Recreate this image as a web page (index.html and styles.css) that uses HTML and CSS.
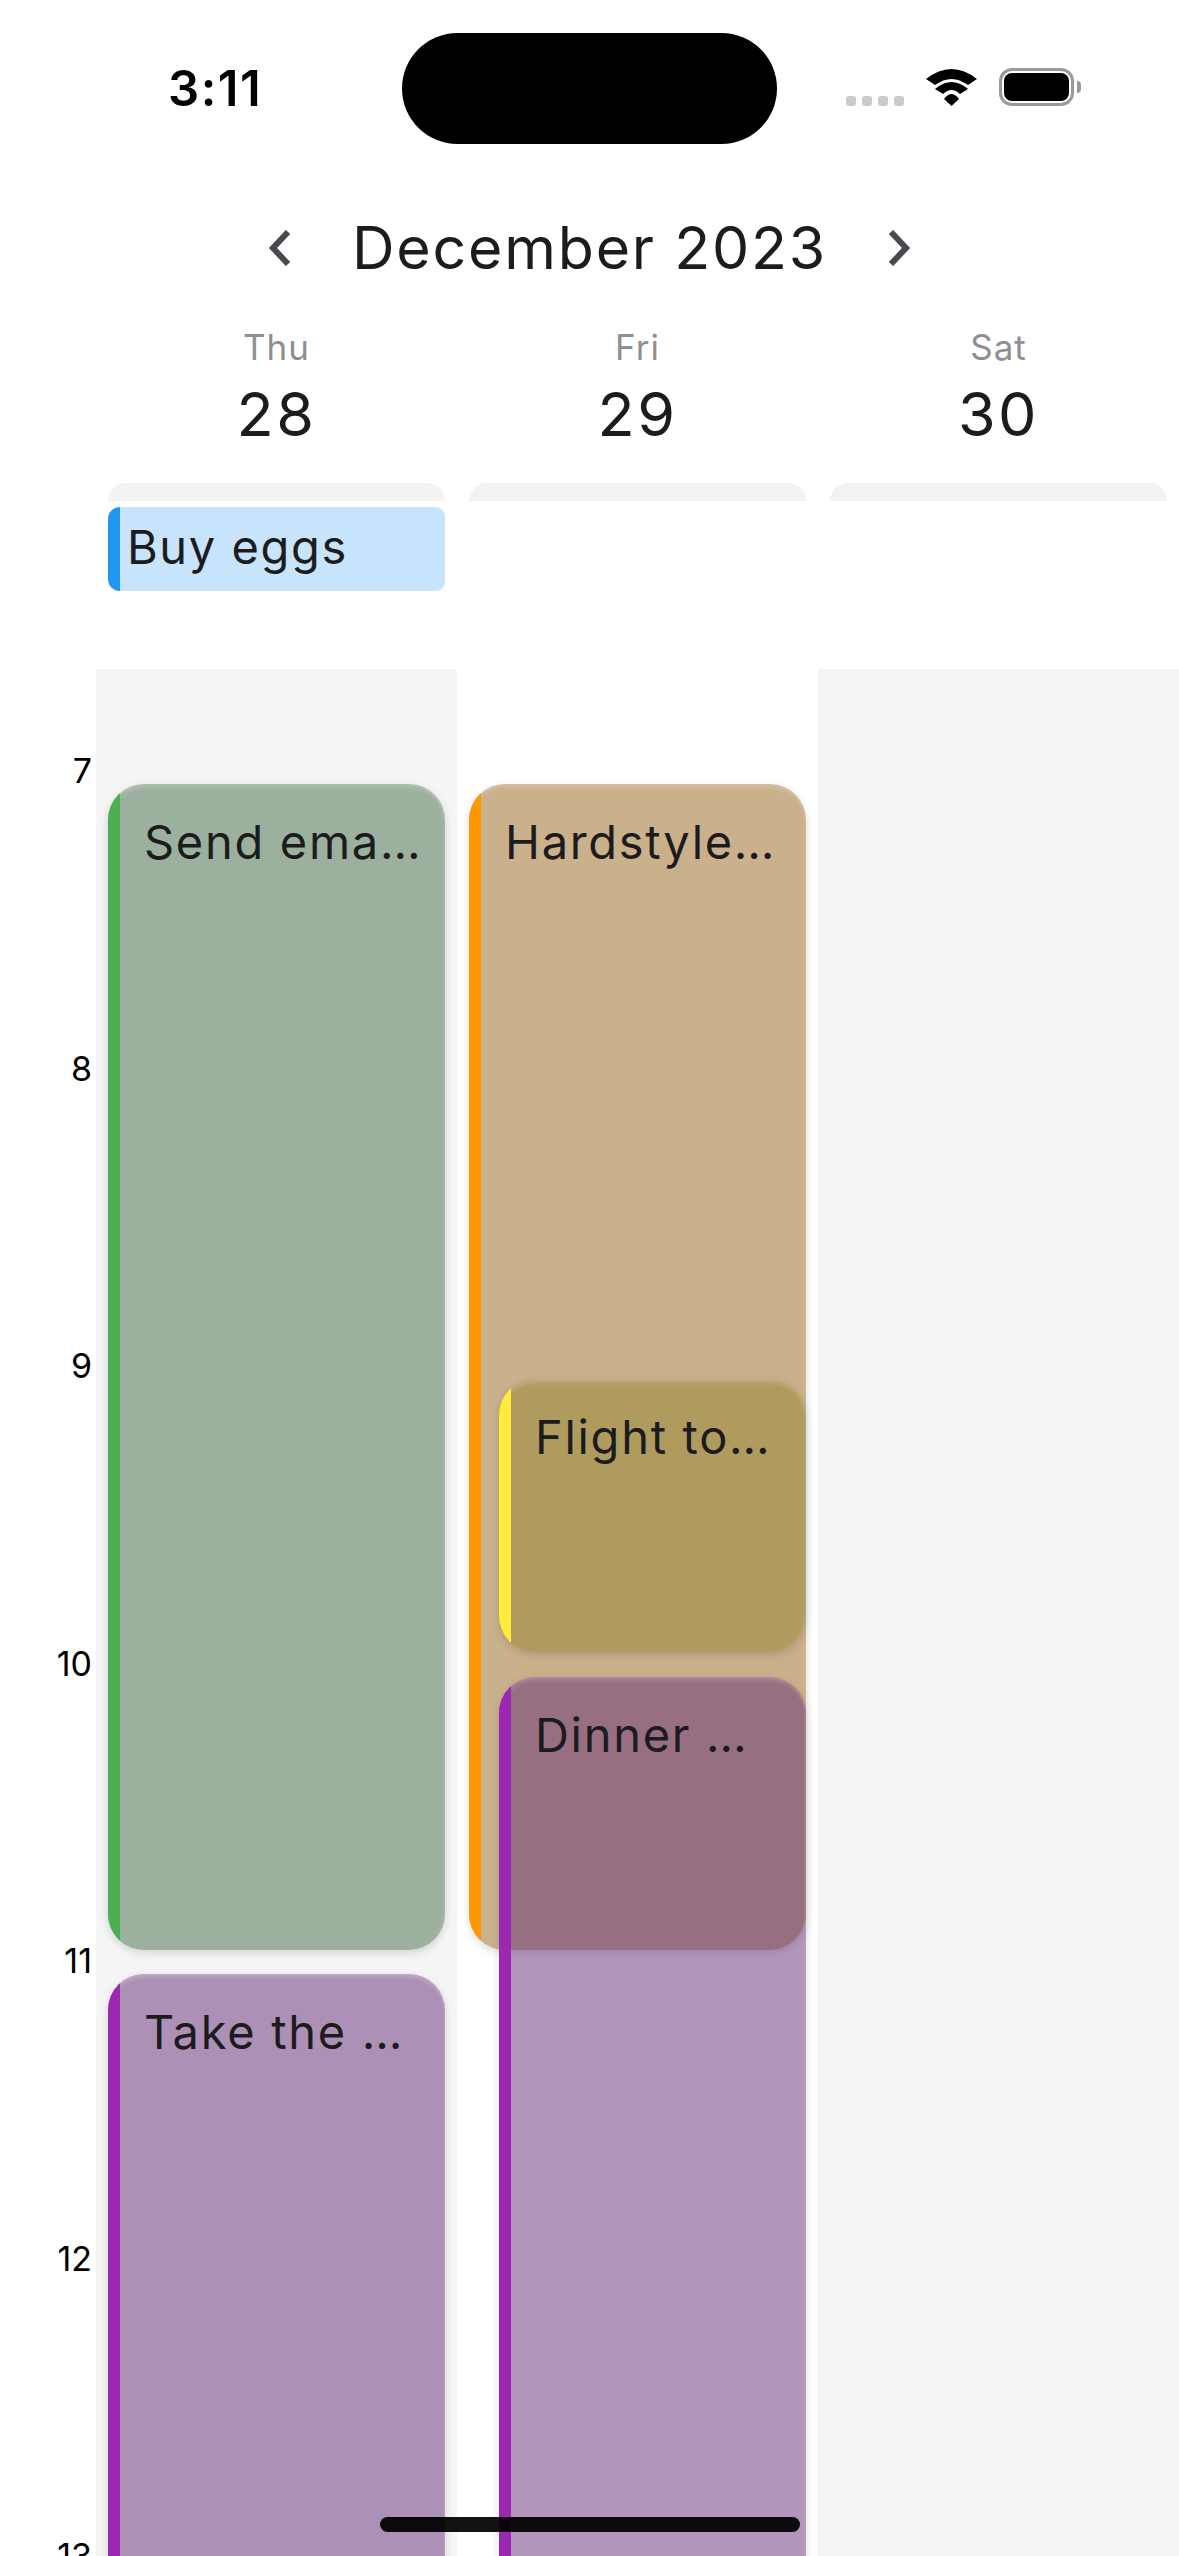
FILE: index.html
```html
<!DOCTYPE html>
<html lang="en">
<head>
  <meta charset="UTF-8" />
  <title>Calendar</title>
  <link rel="stylesheet" href="styles.css">
</head>
<body>
  <div class="statusbar">
    <div class="time">3:11</div>
    <div class="island"></div>
    <div class="signal">
      <span class="dot"></span><span class="dot"></span><span class="dot"></span><span class="dot"></span>
    </div>
    <svg class="wifi" width="51" height="37" viewBox="0 0 51 37">
      <path d="M0 10Q25.500 -10 51 10L42 16Q25.500 4 9 16Z" />
      <path d="M9 20Q25.500 6 42 20L34 25Q25.500 17 17 25Z" />
      <path d="M18 30Q25.500 20 33 30L25.500 37Z" />
    </svg>
    <div class="battery"><div class="battery-fill"></div></div>
    <div class="battery-cap"></div>
  </div>

  <!-- Month switcher -->
  <div class="month">
    <svg class="chevron" width="24" height="36" viewBox="0 0 24 36">
      <polyline points="20,2 5,18 20,34" />
    </svg>
    <div class="month-title">December 2023</div>
    <svg class="chevron" width="24" height="36" viewBox="0 0 24 36">
      <polyline points="4,2 19,18 4,34" />
    </svg>
  </div>

  <!-- Day headers and all-day events -->
  <div class="days">
    <div class="day">
      <div class="day-name">Thu</div>
      <div class="day-num">28</div>
      <div class="allday-track"></div>
      <div class="allday-event"><span class="allday-bar"></span><span class="allday-title">Buy eggs</span></div>
    </div>
    <div class="day">
      <div class="day-name">Fri</div>
      <div class="day-num">29</div>
      <div class="allday-track"></div>
    </div>
    <div class="day">
      <div class="day-name">Sat</div>
      <div class="day-num">30</div>
      <div class="allday-track"></div>
    </div>
  </div>

  <!-- Hour grid -->
  <div class="timeline">
    <div class="hours">
      <div class="hour">7</div>
      <div class="hour">8</div>
      <div class="hour">9</div>
      <div class="hour">10</div>
      <div class="hour">11</div>
      <div class="hour">12</div>
      <div class="hour">13</div>
    </div>

    <div class="col col-grey">
      <div class="event ev-send"><span class="event-bar"></span><div class="event-title">Send ema…</div></div>
      <div class="event ev-take"><span class="event-bar"></span><div class="event-title">Take the …</div></div>
    </div>

    <div class="col">
      <div class="event ev-hardstyle"><span class="event-bar"></span><div class="event-title">Hardstyle…</div></div>
      <div class="event ev-flight"><span class="event-bar"></span><div class="event-title">Flight to…</div></div>
      <div class="event ev-dinner"><span class="event-bar"></span><div class="event-title">Dinner …</div></div>
    </div>

    <div class="col col-grey"></div>
  </div>

  <div class="home-indicator"></div>
</body>
</html>
```

FILE: styles.css
```css
* { box-sizing: border-box; }
html, body { margin: 0; padding: 0; }
body { position: relative; width: 1179px; height: 2556px; overflow: hidden; background: #fff; font-family: Inter, "Liberation Sans", sans-serif; color: #1c1c1e; display: flex; flex-direction: column; }

/* status bar */
.statusbar { display: flex; align-items: center; height: 111px; margin-top: 33px; }
.time { width: 402px; padding-left: 168px; font-size: 49px; font-weight: 600; letter-spacing: 1.5px; color: #000; line-height: 108px; }
.island { width: 375px; height: 111px; border-radius: 56px; background: #000; }
.signal { display: flex; gap: 6px; margin-left: 69px; margin-top: 25px; }
.dot { width: 10px; height: 10px; border-radius: 3px; background: #ccc; }
.wifi { margin-left: 22px; fill: #000; margin-top: -3px; }
.battery { width: 75px; height: 38px; margin-left: 22px; margin-top: -3px; padding: 2px; border: 3px solid #999; border-radius: 13px; }
.battery-fill { width: 100%; height: 100%; border-radius: 8px; background: #000; }
.battery-cap { width: 4px; height: 12px; margin-left: 3px; margin-top: -3px; border-radius: 0 6px 6px 0; background: #999; }

/* month */
.month { display: flex; align-items: center; justify-content: center; gap: 60px; height: 120px; margin-top: 44px; margin-bottom: 2px; }
.month .chevron { fill: none; stroke: #48484e; stroke-width: 6; }
.month-title { font-size: 59px; font-weight: 435; letter-spacing: 1.8px; line-height: 120px; }

/* day headers */
.days { display: grid; grid-template-columns: repeat(3, 361px); margin-left: 96px; height: 359px; padding-top: 15px; }
.day { padding: 0 12px; text-align: center; }
.day-name { font-size: 35px; line-height: 44px; color: #8e8e93; letter-spacing: 1px; }
.day-num { margin-top: 9px; font-size: 61px; font-weight: 435; line-height: 72px; letter-spacing: 2.5px; }
.allday-track { height: 18px; margin-top: 33px; border-radius: 18px 18px 0 0; background: #f2f2f2; }
.allday-event { display: flex; height: 84px; margin-top: 6px; border-radius: 12px 9px 9px 12px; overflow: hidden; background: #c7e4fc; text-align: left; }
.allday-bar { width: 12px; background: #2196f3; }
.allday-title { padding-left: 7px; font-size: 47px; font-weight: 435; letter-spacing: 1.6px; line-height: 80px; }

/* timeline */
.timeline { display: grid; grid-template-columns: 96px repeat(3, 361px); flex: 1; overflow: hidden; }
.hours { padding-top: 82px; overflow: hidden; }
.hour { height: 297.5px; padding-right: 4px; text-align: right; font-size: 34px; line-height: 40px; color: #000; }
.col { position: relative; overflow: hidden; }
.col-grey { background: #f5f5f5; }

/* events sit on the hour grid, 297.5px per hour, and may overlap */
.event { position: absolute; left: 12px; right: 12px; display: flex; overflow: hidden; border-radius: 36px; box-shadow: 0 3px 8px rgba(0, 0, 0, .14), inset 0 6px 5px -3px rgba(255, 255, 255, .22), inset -3px 0 4px -2px rgba(255, 255, 255, .12); }
.event-bar { flex: none; width: 12px; background: var(--bar); }
.event-title { padding: 29px 0 0 24px; font-size: 47px; font-weight: 435; line-height: 58px; letter-spacing: 1.7px; white-space: nowrap; color: #1c1c1e; }
.ev-send { --bar: #4caf50; top: 115px; height: 1166px; background: rgba(68, 110, 70, .5); }
.ev-take { --bar: #9c27b0; top: 1305px; height: 1000px; background: rgba(101, 43, 117, .5); }
.ev-hardstyle { --bar: #ff9800; top: 115px; height: 1166px; background: rgba(151, 97, 25, .5); }
.ev-flight { --bar: #ffeb3b; top: 710px; height: 273px; left: 42px; background: rgba(149, 134, 50, .5); }
.ev-dinner { --bar: #9c27b0; top: 1008px; height: 1000px; left: 42px; background: rgba(101, 43, 117, .5); }

.home-indicator { position: absolute; left: 380px; bottom: 24px; width: 420px; height: 15px; border-radius: 8px; background: rgba(0, 0, 0, .93); }
```
